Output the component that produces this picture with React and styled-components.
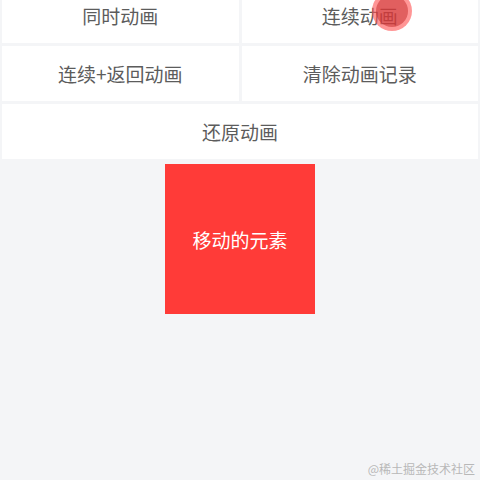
import React from "react";
import styled, { createGlobalStyle } from "styled-components";

const GlobalStyle = createGlobalStyle`
  html, body {
    margin: 0;
    padding: 0;
    background: #f4f5f7;
    font-family: "Noto Sans CJK SC", "Noto Sans", sans-serif;
  }
`;

const Page = styled.div`
  position: relative;
  width: 480px;
  height: 480px;
  overflow: hidden;
  background: #f4f5f7;
`;

const ButtonGrid = styled.div`
  display: grid;
  grid-template-columns: 1fr 1fr;
  gap: 3px;
  padding: 0 2px;
  margin-top: -12px;
`;

const ActionButton = styled.div`
  grid-column: ${(p) => (p.wide ? "1 / span 2" : "auto")};
  height: 55px;
  background: #fff;
  display: flex;
  align-items: center;
  justify-content: center;
  font-size: 19px;
  color: #5c5c5c;
`;

const Stage = styled.div`
  display: flex;
  justify-content: center;
  padding-top: 5px;
`;

const MovingBox = styled.div`
  width: 150px;
  height: 150px;
  background: #ff3b38;
  color: #fff;
  font-size: 19px;
  display: flex;
  align-items: center;
  justify-content: center;
`;

/* touch indicator left over from the screen recording */
const TouchDot = styled.div`
  position: absolute;
  left: 372px;
  top: -9px;
  width: 40px;
  height: 40px;
  border-radius: 50%;
  background: rgba(255, 80, 80, 0.6);
  display: flex;
  align-items: center;
  justify-content: center;

  &::after {
    content: "";
    width: 32px;
    height: 32px;
    border-radius: 50%;
    background: rgba(195, 40, 40, 0.5);
  }
`;

const Watermark = styled.div`
  position: absolute;
  right: 5px;
  bottom: 3px;
  font-size: 12px;
  color: #b8b8b8;
`;

const actions = ["同时动画", "连续动画", "连续+返回动画", "清除动画记录"];

export default function App() {
  return (
    <Page>
      <GlobalStyle />
      <ButtonGrid>
        {actions.map((a) => (
          <ActionButton key={a}>{a}</ActionButton>
        ))}
        <ActionButton wide>还原动画</ActionButton>
      </ButtonGrid>
      <Stage>
        <MovingBox>移动的元素</MovingBox>
      </Stage>
      <TouchDot />
      <Watermark>@稀土掘金技术社区</Watermark>
    </Page>
  );
}
